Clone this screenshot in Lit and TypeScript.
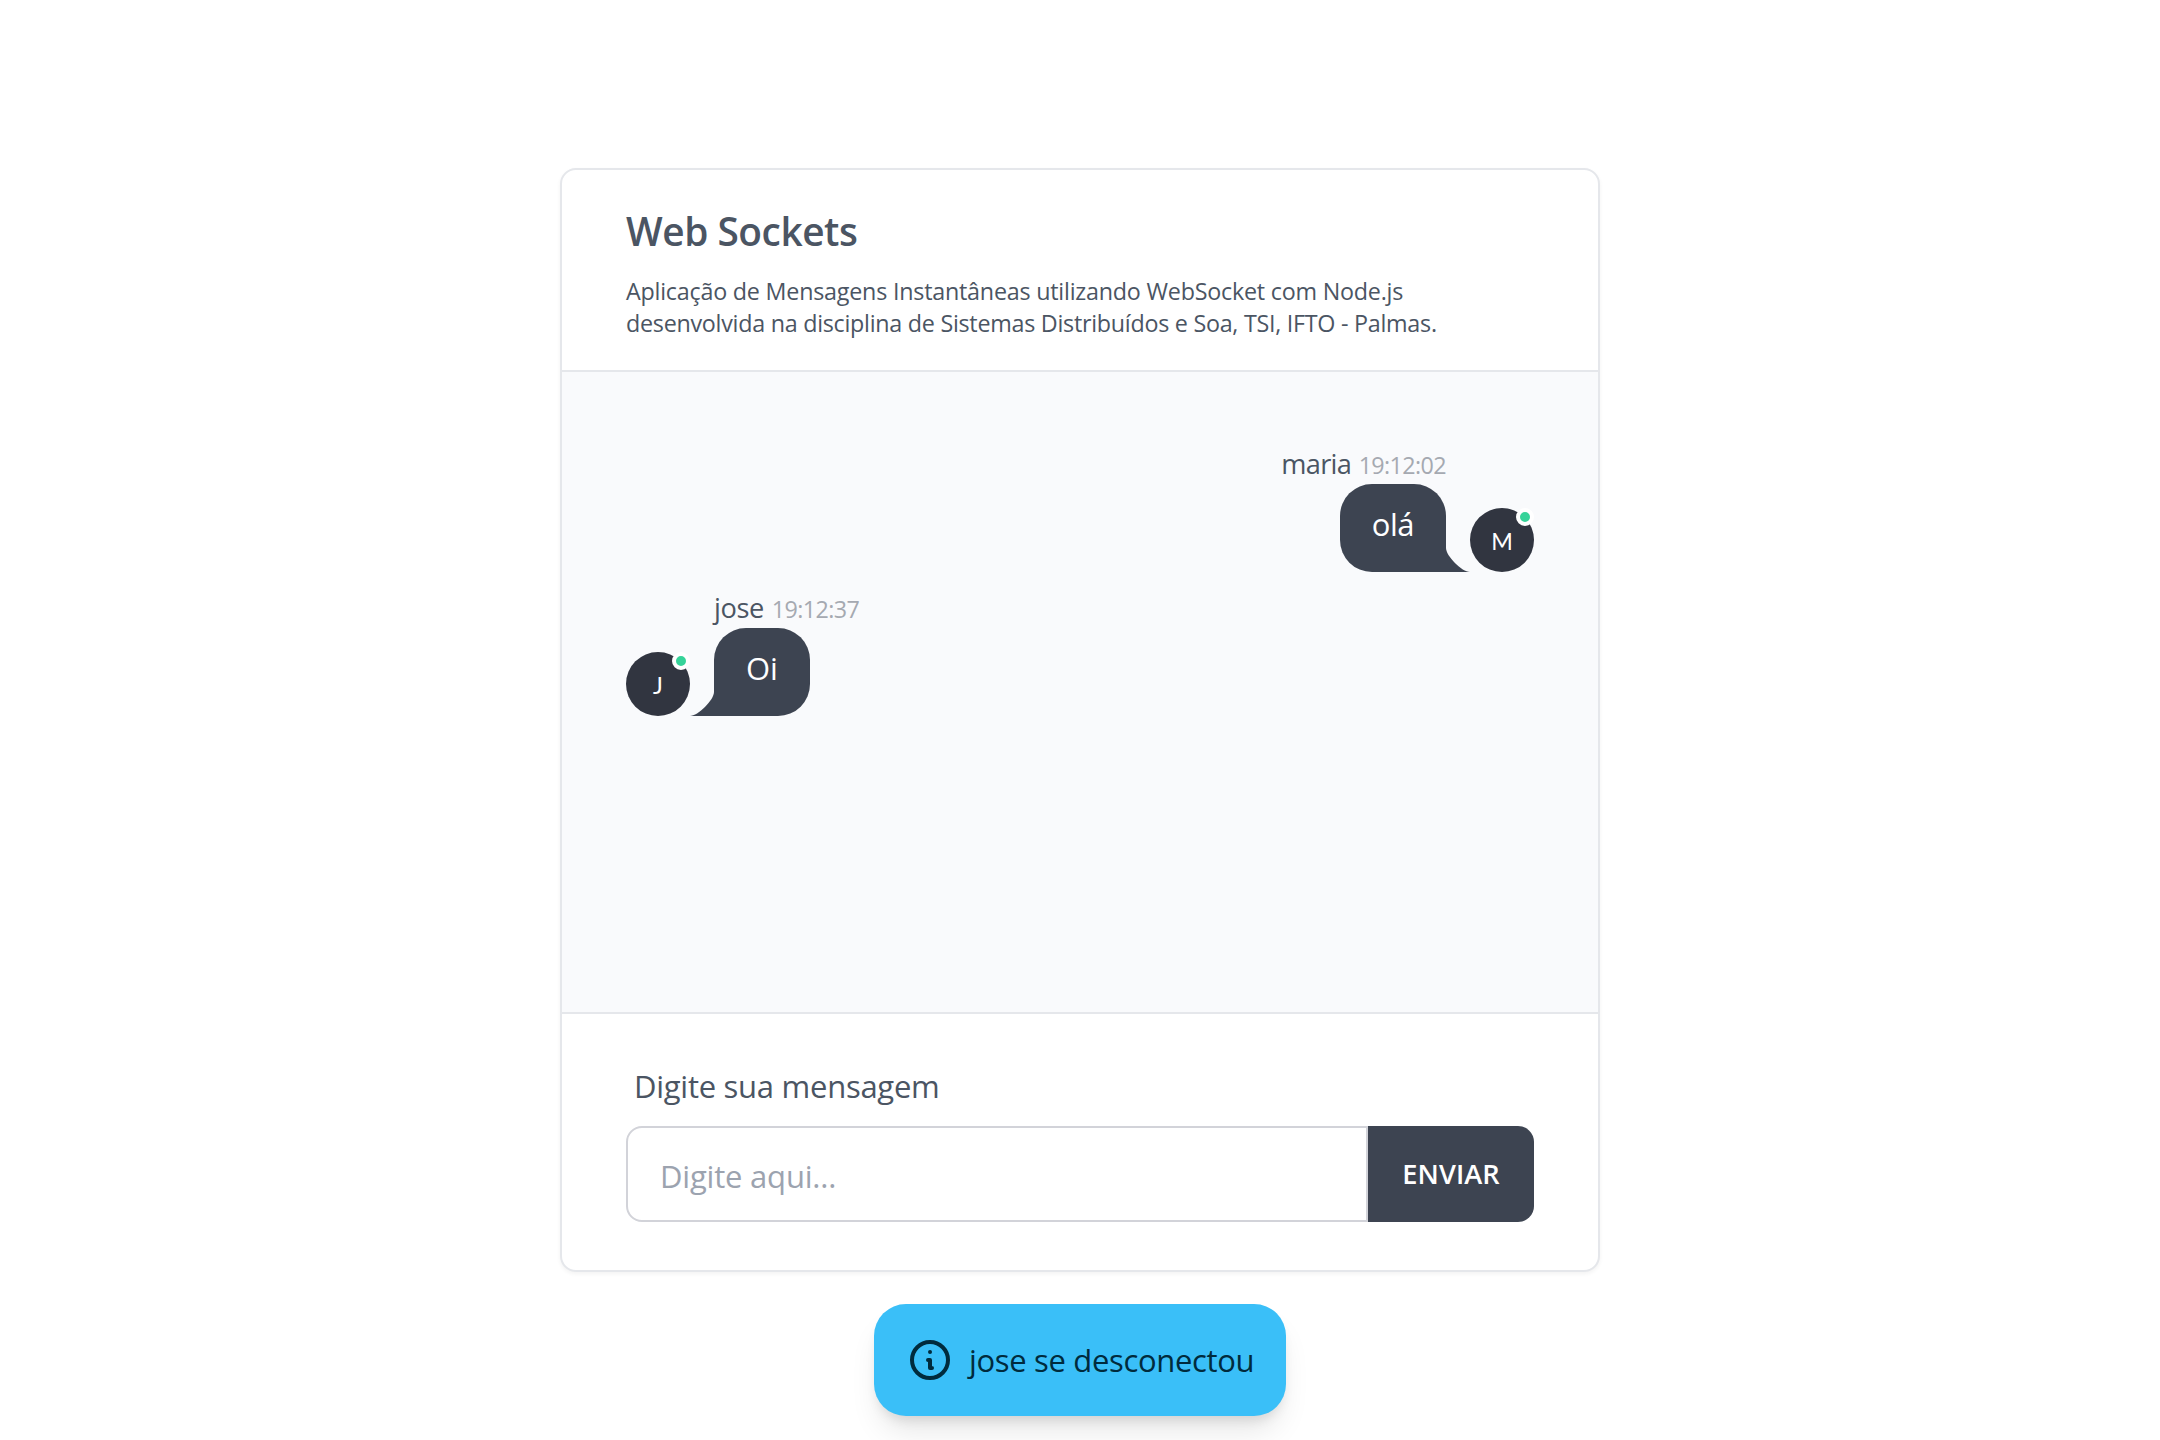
import { LitElement, html, css } from "lit";
import { customElement, property, state } from "lit/decorators.js";
import { classMap } from "lit/directives/class-map.js";

interface Message {
  author: string;
  time: string;
  text: string;
  own: boolean;
}

@customElement("chat-message")
class ChatMessage extends LitElement {
  @property({ attribute: false }) message!: Message;

  static styles = css`
    :host {
      display: block;
    }
    .row {
      display: flex;
      align-items: flex-end;
      gap: 24px;
    }
    .row.own {
      flex-direction: row-reverse;
    }
    .column {
      display: flex;
      flex-direction: column;
      align-items: flex-start;
    }
    .own .column {
      align-items: flex-end;
    }
    .meta {
      display: flex;
      align-items: baseline;
      gap: 8px;
      height: 40px;
      line-height: 40px;
      font-size: 27.2px;
      letter-spacing: -0.42px;
      color: #4b5563;
    }
    .own .meta {
      gap: 7.5px;
      letter-spacing: -0.7px;
    }
    .meta .time {
      font-size: 23.3px;
      letter-spacing: -0.6px;
      color: #a5a9b1;
    }
    .bubble {
      position: relative;
      box-sizing: border-box;
      height: 88px;
      padding: 16px 32px 24px;
      border-radius: 32px 32px 32px 0;
      background: #3d4451;
      color: #fff;
      font-size: 31px;
      line-height: 48px;
      letter-spacing: -0.1px;
    }
    .own .bubble {
      border-radius: 32px 32px 0 32px;
      letter-spacing: -0.5px;
    }
    .tail {
      position: absolute;
      bottom: 0;
      left: -23.9px;
      width: 24px;
      height: 24px;
      fill: #3d4451;
    }
    .own .tail {
      left: auto;
      right: -23.9px;
      transform: scaleX(-1);
    }
    .avatar {
      position: relative;
      box-sizing: border-box;
      display: flex;
      align-items: center;
      justify-content: center;
      width: 64px;
      height: 64px;
      padding-top: 2px;
      border-radius: 50%;
      background: #313540;
      color: #fff;
      font-family: Lato, sans-serif;
      font-size: 23.3px;
      line-height: 32px;
    }
    .status {
      position: absolute;
      top: 0;
      right: 0;
      width: 10px;
      height: 10px;
      border: 4px solid #fff;
      border-radius: 50%;
      background: #36d399;
    }
  `;

  render() {
    const { author, time, text, own } = this.message;
    return html`
      <div class=${classMap({ row: true, own })}>
        <div class="avatar">
          <span>${author[0].toUpperCase()}</span>
          <span class="status"></span>
        </div>
        <div class="column">
          <div class="meta"><span>${author}</span><span class="time">${time}</span></div>
          <div class="bubble">
            <svg class="tail" viewBox="0 0 3 3"><path d="M0 3L3 3L3 0C3 1 1 3 0 3" /></svg>
            ${text}
          </div>
        </div>
      </div>
    `;
  }
}

@customElement("app-root")
class AppRoot extends LitElement {
  @state() private messages: Message[] = [
    { author: "maria", time: "19:12:02", text: "olá", own: true },
    { author: "jose", time: "19:12:37", text: "Oi", own: false },
  ];

  static styles = css`
    :host {
      display: block;
      font-family: "Open Sans", "Noto Sans", sans-serif;
      color: #4b5563;
    }
    .page {
      box-sizing: border-box;
      display: flex;
      flex-direction: column;
      align-items: center;
      gap: 32px;
      height: 1440px;
      padding-top: 168px;
      overflow: hidden;
      background: #fff;
    }
    .card {
      box-sizing: border-box;
      flex: none;
      width: 1040px;
      border: 2px solid #e5e7eb;
      border-radius: 16px;
      background: #fff;
      box-shadow: 0 2px 4px rgba(0, 0, 0, 0.05);
    }
    .header {
      box-sizing: border-box;
      height: 202px;
      padding: 41px 64px 0;
      border-bottom: 2px solid #e5e7eb;
    }
    .title {
      margin: 0 0 24px;
      font-size: 38.8px;
      font-weight: 600;
      line-height: 40px;
      letter-spacing: -0.45px;
    }
    .description {
      margin: 0;
      font-size: 23.3px;
      line-height: 32px;
      letter-spacing: -0.22px;
      white-space: nowrap;
    }
    .course {
      letter-spacing: -0.265px;
    }
    .messages {
      box-sizing: border-box;
      display: flex;
      flex-direction: column;
      gap: 16px;
      height: 642px;
      padding: 72px 64px 0;
      border-bottom: 2px solid #e5e7eb;
      background: #f9fafc;
    }
    .composer {
      padding: 48px 64px;
    }
    .label {
      display: block;
      margin-bottom: 16px;
      padding-left: 8px;
      font-size: 31px;
      line-height: 48px;
      letter-spacing: -0.27px;
    }
    .field {
      display: flex;
      height: 96px;
    }
    .input {
      box-sizing: border-box;
      flex: 1;
      min-width: 0;
      margin: 0;
      padding: 24px 32px 20px;
      border: 2px solid #d2d3d9;
      border-radius: 16px 0 0 16px;
      outline: none;
      background: #fff;
      color: #4b5563;
      font: 31px/48px "Open Sans", "Noto Sans", sans-serif;
      letter-spacing: -0.2px;
    }
    .input::placeholder {
      color: #9ca3af;
      opacity: 1;
    }
    .send {
      width: 166px;
      margin: 0;
      padding: 0;
      border: 0;
      border-radius: 0 16px 16px 0;
      background: #3d4451;
      color: #fff;
      font: 600 27.2px/40px "Open Sans", "Noto Sans", sans-serif;
      letter-spacing: 0.06px;
    }
    .toast {
      box-sizing: border-box;
      flex: none;
      display: flex;
      align-items: center;
      gap: 15px;
      width: 412px;
      height: 112px;
      padding: 0 32px;
      border-radius: 32px;
      background: #3abff8;
      color: #002b3d;
      font-size: 31px;
      line-height: 48px;
      letter-spacing: -0.33px;
      white-space: nowrap;
      box-shadow: 0 20px 30px -6px rgba(0, 0, 0, 0.1), 0 8px 12px -4px rgba(0, 0, 0, 0.1);
    }
    .icon {
      flex: none;
      width: 48px;
      height: 48px;
      fill: none;
      stroke: currentColor;
      stroke-width: 2;
      stroke-linecap: round;
      stroke-linejoin: round;
    }
  `;

  render() {
    return html`
      <main class="page">
        <section class="card">
          <header class="header">
            <h1 class="title">Web Sockets</h1>
            <p class="description">
              Aplicação de Mensagens Instantâneas utilizando WebSocket com Node.js<br />
              <span class="course">desenvolvida na disciplina de Sistemas Distribuídos e Soa, TSI, IFTO - Palmas.</span>
            </p>
          </header>
          <div class="messages">
            ${this.messages.map((m) => html`<chat-message .message=${m}></chat-message>`)}
          </div>
          <div class="composer">
            <label class="label" for="text">Digite sua mensagem</label>
            <div class="field">
              <input class="input" id="text" type="text" placeholder="Digite aqui..." />
              <button class="send" type="button">ENVIAR</button>
            </div>
          </div>
        </section>
        <div class="toast" role="status">
          <svg class="icon" viewBox="0 0 24 24">
            <path d="M13 16h-1v-4h-1m1-4h.01M21 12a9 9 0 11-18 0 9 9 0 0118 0z" />
          </svg>
          <span>jose se desconectou</span>
        </div>
      </main>
    `;
  }
}
